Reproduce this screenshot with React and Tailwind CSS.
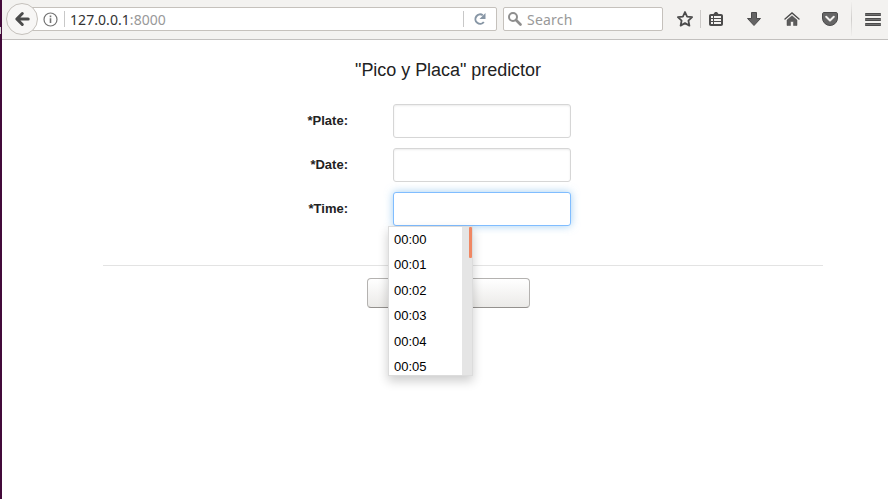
import React from 'react';

const times = ['00:00', '00:01', '00:02', '00:03', '00:04', '00:05'];

function Toolbar() {
  return (
    <header className="flex h-10 items-center border-b border-[#c2c0be] bg-[#f3f2f0] pb-px font-['Noto_Sans',sans-serif] text-[14px]">
      <div className="z-10 ml-1 flex size-8 shrink-0 items-center justify-center rounded-full border border-[#c5c1bc] bg-[#f7f6f5]">
        <svg width="16" height="16" viewBox="0 0 16 16" fill="none" stroke="#4b4b4b" strokeWidth="3">
          <path d="M8.300 2.500 2.800 8l5.500 5.500M3.500 8h10.700" strokeLinejoin="round" strokeLinecap="round" />
        </svg>
      </div>
      <div className="-ml-2 flex h-6 w-[467px] shrink-0 items-center rounded-[2px] border border-[#c5c1bc] bg-white pl-[12px]">
        <svg width="15" height="15" viewBox="0 0 15 15" fill="none" stroke="#737373">
          <circle cx="7.500" cy="7.500" r="6.500" strokeWidth="1.200" />
          <path d="M7.500 6.300v4.700M7.500 3.600v1.600" strokeWidth="1.600" />
        </svg>
        <span className="ml-[6px] h-4 w-px bg-[#c8c8c8]" />
        <span className="ml-[5px] w-[100px] whitespace-nowrap pt-px leading-5 tracking-[0.06px] text-[#333]">
          127.0.0.1<span className="text-[#999]">:8000</span>
        </span>
        <span className="ml-auto h-4 w-px bg-[#c8c8c8]" />
        <svg className="ml-[9px] mr-[9px]" width="14" height="14" viewBox="0 0 14 14" fill="none">
          <path d="M9.800 3.200A4.700 4.700 0 1 0 10.800 10" stroke="#8796a5" strokeWidth="2" />
          <path d="M12.500 1v6H6.500Z" fill="#8796a5" />
        </svg>
      </div>
      <div className="ml-1.5 flex h-6 w-[160px] shrink-0 items-center rounded-[2px] border border-[#c5c1bc] bg-white pl-[3px] text-[#999]">
        <svg width="16" height="16" viewBox="0 0 16 16" fill="none" stroke="#8e8e8e">
          <circle cx="6" cy="6" r="4" strokeWidth="2" />
          <path d="m9 9 4.500 4.500" strokeWidth="2.700" strokeLinecap="round" />
        </svg>
        <span className="ml-1 pt-px leading-5 tracking-[0.2px]">Search</span>
      </div>
      <svg className="ml-[13px] shrink-0" width="18" height="18" viewBox="0 0 18 18" fill="none" stroke="#4b4b4b" strokeWidth="1.800" strokeLinejoin="round">
        <path d="m9 2 2.100 4.600 5 .6-3.700 3.400 1 5L9 13.100l-4.400 2.500 1-5L1.900 7.200l5-.6Z" />
      </svg>
      <span className="ml-[6px] h-[18px] w-px shrink-0 bg-[#cccac8]" />
      <svg className="ml-[8px] shrink-0" width="14" height="16" viewBox="0 0 14 16">
        <path d="M2 3h2.500L6 1h2l1.500 2H12c1.300 0 2 .7 2 2v8c0 1.300-.7 2-2 2H2c-1.300 0-2-.7-2-2V5c0-1.300.7-2 2-2Z" fill="#4b4b4b" />
        <path d="M2 5h2v2H2zm3 0h7v2H5zm-3 3h2v2H2zm3 0h7v2H5zm-3 3h2v2H2zm3 0h7v2H5z" fill="#f3f2f0" />
      </svg>
      <svg className="ml-[24px] shrink-0" width="14" height="14" viewBox="0 0 14 14">
        <path d="M4.500.5h5v6h4L7 13.500.5 6.500h4Z" fill="#646464" stroke="#4b4b4b" strokeLinejoin="round" />
      </svg>
      <svg className="ml-[23px] shrink-0" width="16" height="16" viewBox="0 0 16 16">
        <path d="m1 8 7-6 7 6" fill="none" stroke="#4b4b4b" strokeWidth="1.400" strokeLinecap="round" />
        <path d="m3 9 5-4.200L13 9v5.500H9.500v-4h-3v4H3Z" fill="#5c5c5c" stroke="#4b4b4b" strokeWidth=".5" />
      </svg>
      <svg className="ml-[22px] shrink-0" width="16" height="14" viewBox="0 0 16 14">
        <path d="M2 .5h12c1 0 1.500.6 1.500 1.500v4A7.500 7.500 0 0 1 .5 6V2C.5 1.100 1 .5 2 .5Z" fill="#656565" stroke="#4b4b4b" />
        <path d="M4.200 4.800 8 8.500l3.800-3.700" fill="none" stroke="#f3f2f0" strokeWidth="2" strokeLinecap="round" strokeLinejoin="round" />
      </svg>
      <span className="ml-[13px] h-[34px] w-px shrink-0 bg-linear-to-b from-[#f0efed] via-[#d0cecc] to-[#f0efed]" />
      <span className="ml-[13px] flex w-4 shrink-0 flex-col gap-[2px]">
        <span className="h-[3px] rounded-[1px] border-y border-[#4b4b4b] bg-[#707070]" />
        <span className="h-[3px] rounded-[1px] border-y border-[#4b4b4b] bg-[#707070]" />
        <span className="h-[3px] rounded-[1px] border-y border-[#4b4b4b] bg-[#707070]" />
      </span>
    </header>
  );
}

function Field({ label, focused, children }) {
  return (
    <div className="flex h-[34px] items-center">
      <label className="w-[245px] text-right text-[13px] font-bold leading-5 text-[#222]">{label}</label>
      <div className="relative ml-[45px]">
        <input
          aria-label={label}
          className={
            focused
              ? 'block h-[34px] w-[178px] rounded-[3px] border border-[#80bdff] bg-white shadow-[0_0_8px_rgba(102,175,233,0.6)] outline-none'
              : 'block h-[34px] w-[178px] rounded-[3px] border border-[#d6d6d6] bg-white shadow-[inset_0_1px_2px_rgba(0,0,0,0.08)] outline-none'
          }
        />
        {children}
      </div>
    </div>
  );
}

function TimeMenu() {
  return (
    <div className="absolute -left-[5px] top-[34px] z-20 flex h-[150px] w-[85px] overflow-hidden border border-[#dcdcdc] bg-white shadow-[0_5px_10px_rgba(0,0,0,0.2)]">
      <ul className="flex-1 text-[13px] text-black">
        {times.map((time) => (
          <li key={time} className="h-[25.4px] pl-[5px] leading-[25.4px]">{time}</li>
        ))}
      </ul>
      <div className="flex w-[10px] justify-end bg-[#e5e5e5]">
        <span className="h-[31px] w-[3px] rounded-[1px] bg-[#f08763]" />
      </div>
    </div>
  );
}

export default function App() {
  return (
    <div className="flex h-[499px] w-[888px] overflow-hidden bg-white font-['Liberation_Sans',Arial,sans-serif]">
      <div className="flex h-full w-[2px] shrink-0 flex-col bg-[#430a3a]">
        <span className="mt-[27px] h-[7px] w-px bg-[#d6d1d4]" />
      </div>
      <div className="min-w-0 flex-1">
        <Toolbar />
        <main>
          <h1 className="pl-[6px] pt-[18px] text-center text-[18px] leading-6 tracking-[-0.04px] text-[#222]">"Pico y Placa" predictor</h1>
          <form className="ml-[101px] w-[720px]">
            <div className="flex flex-col gap-[10px] pt-[22px]">
              <Field label="*Plate:" />
              <Field label="*Date:" />
              <Field label="*Time:" focused>
                <TimeMenu />
              </Field>
            </div>
            <hr className="mt-[39px] border-[#e3e3e3]" />
            <button type="button" aria-label="Submit" className="ml-[264px] mt-3 block h-[30px] w-[163px] rounded-[4px] border border-[#b4b2b0] border-b-[#94918e] bg-linear-to-b from-white to-[#ebeae8]" />
          </form>
        </main>
      </div>
    </div>
  );
}
